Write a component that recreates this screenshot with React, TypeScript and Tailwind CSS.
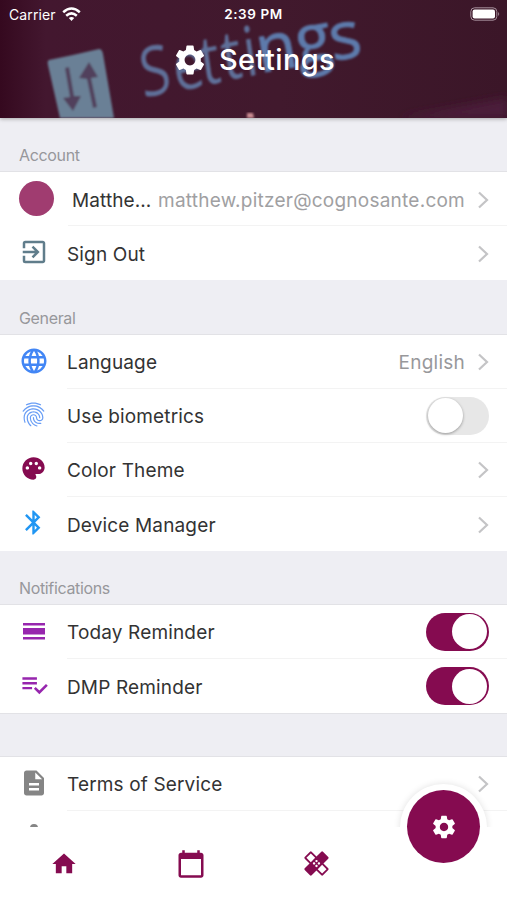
import type { ReactNode } from "react";
import {
  MdBluetooth,
  MdCalendarToday,
  MdDescription,
  MdExitToApp,
  MdFingerprint,
  MdHealing,
  MdHome,
  MdLanguage,
  MdPalette,
  MdSettings,
} from "react-icons/md";

function Chevron() {
  return (
    <svg width="12" height="18" viewBox="0 0 12 18" className="mt-px shrink-0" fill="none" stroke="#c4c4c6" strokeWidth="2.2">
      <path d="M2 1.5 10 9l-8 7.5" />
    </svg>
  );
}

function Toggle({ on }: { on: boolean }) {
  return on ? (
    <div className="flex h-[38px] w-[63px] shrink-0 items-center justify-end rounded-full bg-[#850b50] pr-[2px]">
      <div className="size-[35px] rounded-full bg-white" />
    </div>
  ) : (
    <div className="flex h-[38px] w-[63px] shrink-0 items-center rounded-full bg-[#e7e7e7] pl-[2px]">
      <div className="size-[35px] rounded-full bg-white shadow-[0_1px_3px_rgba(0,0,0,0.35)]" />
    </div>
  );
}

function SectionHeader({ title, tall = false }: { title: string; tall?: boolean }) {
  return (
    <div
      className={
        "shrink-0 border-b border-[#e2e2e6] bg-[#eeeef3] pl-[19px] text-[16px] leading-[22px] tracking-[-0.35px] text-[#97979b] " +
        (tall ? "h-[55px] pt-[27px]" : "h-[54px] pt-[26px]")
      }
    >
      {title}
    </div>
  );
}

type RowProps = { icon: ReactNode; label: string; right?: ReactNode; last?: boolean };

function Row({ icon, label, right = <Chevron />, last = false }: RowProps) {
  return (
    <div className="flex h-[54px] shrink-0">
      <div className="flex w-[67px] shrink-0 justify-center pt-[11px]">{icon}</div>
      <div
        className={
          "flex min-w-0 flex-1 items-center justify-between pr-[18px] " +
          (last ? "" : "border-b border-[#f3f3f3]")
        }
      >
        <span className="pt-[4px] text-[19px] tracking-[0.15px] text-[#333]">{label}</span>
        {right}
      </div>
    </div>
  );
}

function HeaderBackdrop() {
  return (
    <svg className="absolute inset-0" width="507" height="118" viewBox="0 0 507 118">
      <defs>
        <linearGradient id="wine" x1="0" x2="1" y1="0" y2="0">
          <stop offset="0" stopColor="#35091f" />
          <stop offset="0.09" stopColor="#43172f" />
          <stop offset="0.55" stopColor="#41192d" />
          <stop offset="1" stopColor="#3b1628" />
        </linearGradient>
        <filter id="soft" x="-20%" y="-20%" width="140%" height="140%">
          <feGaussianBlur stdDeviation="1" />
        </filter>
        <filter id="softer" x="-20%" y="-50%" width="140%" height="200%">
          <feGaussianBlur stdDeviation="4" />
        </filter>
      </defs>
      <rect width="507" height="118" fill="url(#wine)" />
      <path d="M400 118 507 98v20z" fill="#4b1e3a" filter="url(#softer)" />
      <g filter="url(#soft)">
        <path d="M49 60Q74 55 99 49Q102 49 103 54L114 118H60L48 65Q47 61 49 60z" fill="#6a8096" />
        <g fill="#51415b">
          <path d="M79 78 89 62 98 77 91 78 97 107 93 108 87 79z" />
          <path d="M65 68 69 67 74 96 81 96 73 111 63 98 70 97z" />
        </g>
      </g>
      <g fontFamily="Open Sans, sans-serif" filter="url(#soft)">
        <text
          transform="scale(0.8 1)"
          fontSize="69"
          fill="#5f7099"
          x="179 220 254 281 308"
          y="98 92 86 81 77"
          rotate="-10"
        >
          Setti
        </text>
        <text
          fontSize="66"
          fill="#5d7aab"
          stroke="#5d7aab"
          strokeWidth="1"
          x="260 299 333"
          y="73 64 61"
          rotate="-10"
        >
          ngs
        </text>
      </g>
      <path d="M247 113h6l1 5h-7z" fill="#c98b91" filter="url(#soft)" />
    </svg>
  );
}

function StatusBar() {
  return (
    <div className="relative grid h-[28px] grid-cols-3 items-center text-[14px] text-white">
      <div className="flex items-center gap-[6px] pl-[9px]">
        <span className="tracking-[0.1px]">Carrier</span>
        <svg width="19" height="15" viewBox="0 0 19 15" fill="none" stroke="white" strokeWidth="2.5">
          <path d="M1.2 5.3Q9.5-2.2 17.8 5.3" />
          <path d="M4.2 8.7Q9.5 4 14.8 8.7" />
          <path d="M6.8 11.1Q9.5 9 12.2 11.1L9.5 14z" fill="white" stroke="none" />
        </svg>
      </div>
      <span className="text-center text-[13.5px] font-semibold tracking-[0.6px]">2:39 PM</span>
      <svg width="30" height="14" viewBox="0 0 30 14" className="mr-[7px] justify-self-end">
        <rect x=".8" y=".8" width="26" height="12.4" rx="3.8" fill="none" stroke="#a58f9b" strokeWidth="1" />
        <rect x="2.6" y="2.5" width="22.4" height="9" rx="2" fill="white" />
        <path d="M28.2 5q2 2 0 4z" fill="#a58f9b" />
      </svg>
    </div>
  );
}

function ViewDayIcon() {
  return (
    <svg width="26" height="26" viewBox="0 0 26 26" fill="#9726ae" className="mt-[3px]">
      <path d="M2 4h22v2.5H2zM2 9h22v6.5H2zM2 18h22v2.4H2z" />
    </svg>
  );
}

function PlaylistCheckIcon() {
  return (
    <svg width="29" height="29" viewBox="0 0 24 24" fill="#9726ae" className="ml-px">
      <path d="M14 10H2v2h12v-2zm0-4H2v2h12V6zM2 16h8v-2H2v2zm19.5-4.5L23 13l-6.99 7-4.51-4.5L13 14l3.01 3 5.49-5.5z" />
    </svg>
  );
}

function BottomBar() {
  return (
    <nav className="absolute inset-x-0 bottom-0 h-[73px]">
      <div className="absolute top-[-52px] left-[390px] h-[52px] w-[107px] overflow-hidden px-[10px] pt-[9px]">
        <div className="size-[87px] rounded-full bg-white shadow-[0_0_7px_rgba(0,0,0,0.12)]" />
      </div>
      <div className="relative grid h-full grid-cols-4 items-center bg-white text-[#850b50]">
        <MdHome size={28} className="ml-[2px] justify-self-center" />
        <MdCalendarToday size={30} className="ml-px justify-self-center" />
        <MdHealing size={29} className="justify-self-center" />
      </div>
      <div className="absolute top-[-37px] left-[407px] flex size-[73px] items-center justify-center rounded-full bg-[#850b50] text-white">
        <MdSettings size={28} />
      </div>
    </nav>
  );
}

export default function App() {
  return (
    <div className="relative flex h-[900px] w-[507px] flex-col overflow-hidden bg-white font-['Inter',sans-serif]">
      <header className="relative z-10 h-[118px] shrink-0 shadow-[0_1px_4px_rgba(0,0,0,0.3)]">
        <HeaderBackdrop />
        <StatusBar />
        <div className="relative flex h-[64px] items-center justify-center gap-[11px] text-white">
          <MdSettings size={36} />
          <h1 className="text-[29px] font-medium tracking-[0.4px]">Settings</h1>
        </div>
      </header>

      <SectionHeader title="Account" />
      <div className="flex h-[54px] shrink-0">
        <div className="flex w-[68px] shrink-0 pt-[9px] pl-[19px]">
          <div className="size-[35px] rounded-full bg-[#a03c70]" />
        </div>
        <div className="flex min-w-0 flex-1 items-center border-b border-[#f3f3f3] pt-[2px] pr-[18px] pl-[4px] text-[19px]">
          <span className="w-[86px] shrink-0 pt-[3px] tracking-[0.1px] whitespace-nowrap text-[#333]">Matthe...</span>
          <span className="flex-1 pt-[3px] tracking-[0.24px] whitespace-nowrap text-[#a0a0a2]">matthew.pitzer@cognosante.com</span>
          <Chevron />
        </div>
      </div>
      <Row icon={<MdExitToApp size={30} color="#607d8b" />} label="Sign Out" last />

      <SectionHeader title="General" tall />
      <Row
        icon={<MdLanguage size={30} color="#4286f5" />}
        label="Language"
        right={
          <div className="flex items-center gap-[12px]">
            <span className="pt-[4px] text-[19px] tracking-[0.25px] text-[#98989b]">English</span>
            <Chevron />
          </div>
        }
      />
      <Row icon={<MdFingerprint size={29} color="#689df5" />} label="Use biometrics" right={<Toggle on={false} />} />
      <Row icon={<MdPalette size={29} color="#850b50" viewBox="-1 -1 26 26" />} label="Color Theme" />
      <Row icon={<MdBluetooth size={29} color="#2196f3" />} label="Device Manager" last />

      <SectionHeader title="Notifications" />
      <Row icon={<ViewDayIcon />} label="Today Reminder" right={<Toggle on />} />
      <Row icon={<PlaylistCheckIcon />} label="DMP Reminder" right={<Toggle on />} last />

      <div className="h-[44px] shrink-0 border-y border-[#e2e2e6] bg-[#eeeef3]" />
      <Row icon={<MdDescription size={30} color="#858585" />} label="Terms of Service" />
      <div className="flex h-[54px] shrink-0 justify-start pt-[13px] pl-[30px]">
        <div className="size-[8px] rounded-full bg-[#858585]" />
      </div>

      <BottomBar />
    </div>
  );
}
